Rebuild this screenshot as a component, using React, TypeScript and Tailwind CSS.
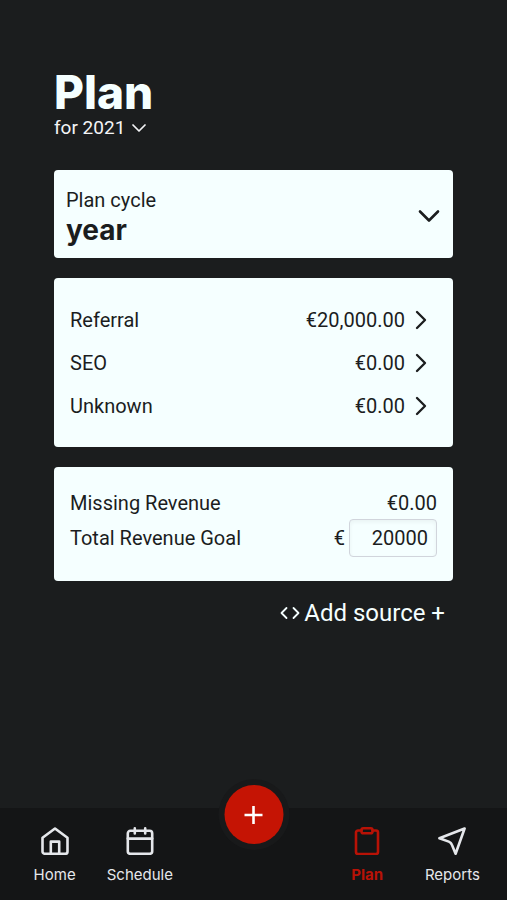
import { ChevronDown, ChevronRight } from 'lucide-react';

const sources = [
  { name: 'Referral', amount: '€20,000.00' },
  { name: 'SEO', amount: '€0.00' },
  { name: 'Unknown', amount: '€0.00' },
];

const years = ['2020', '2021', '2022'];
const cycles = ['month', 'quarter', 'year'];

const iconProps = {
  viewBox: '0 0 28 28',
  fill: 'none',
  stroke: 'currentColor',
  strokeWidth: 2.6,
  strokeLinecap: 'round',
  strokeLinejoin: 'round',
  className: 'size-7',
  'aria-hidden': true,
} as const;

const HomeIcon = () => (
  <svg {...iconProps}>
    <path d="M1.5 10.8 14 1.5l12.500 9.300v13.600a2.400 2.400 0 0 1-2.400 2.400H3.900a2.400 2.400 0 0 1-2.400-2.400z" />
    <path d="M9.800 26.600V14.600h8.400v12" />
  </svg>
);

const ScheduleIcon = () => (
  <svg {...iconProps}>
    <rect x="1.800" y="3.800" width="24.400" height="23" rx="2.600" />
    <path d="M1.800 11.600h24.400M8.800 1.400v5M19.200 1.400v5" />
  </svg>
);

const PlanIcon = () => (
  <svg {...iconProps}>
    <path d="M8.500 3.500H5A2 2 0 0 0 3 5.500V25a2 2 0 0 0 2 2h18a2 2 0 0 0 2-2V5.500a2 2 0 0 0-2-2h-3.500" />
    <rect x="8.500" y="1.300" width="11" height="5" rx="1.800" />
  </svg>
);

const ReportsIcon = () => (
  <svg {...iconProps}>
    <path d="M26.600 1.500 1.400 11.200l9.400 3.400q2.300.9 3.100 3.100l3.700 9z" />
  </svg>
);

const navLeft = [
  { label: 'Home', Icon: HomeIcon, active: false },
  { label: 'Schedule', Icon: ScheduleIcon, active: false },
];

const navRight = [
  { label: 'Plan', Icon: PlanIcon, active: true },
  { label: 'Reports', Icon: ReportsIcon, active: false },
];

const NavItem = ({ label, Icon, active }: (typeof navLeft)[number]) => (
  <a
    href={`#${label.toLowerCase()}`}
    aria-current={active ? 'page' : undefined}
    className={`flex flex-col items-center gap-2 font-[Inter,sans-serif] text-[15px] leading-6 ${
      active ? 'font-bold text-[#b81206]' : 'text-gray-200'
    }`}
  >
    <Icon />
    {label}
  </a>
);

const App = () => {
  return (
    <div className="flex min-h-screen flex-col bg-[#1b1d1e] font-[Roboto,sans-serif] text-xl text-[#1b1d1e]">
      <main className="flex flex-1 flex-col px-[54px] pt-[68px]">
        <h1 className="font-[Inter,sans-serif] text-[46px] leading-12 font-extrabold text-[#f5ffff]">Plan</h1>
        <div className="flex items-center text-[19px] leading-6 text-gray-100">
          <select
            aria-label="Plan year"
            defaultValue="2021"
            className="appearance-none bg-transparent field-sizing-content"
          >
            {years.map((year) => (
              <option key={year} value={year}>
                for {year}
              </option>
            ))}
          </select>
          <ChevronDown className="ml-0.5 size-6" strokeWidth={1.75} />
        </div>

        <section className="mt-[30px] flex items-center rounded bg-[#f5ffff] pt-4 pr-1.5 pb-3 pl-3">
          <div className="flex flex-1 flex-col">
            <label htmlFor="cycle" className="leading-7">
              Plan cycle
            </label>
            <select
              id="cycle"
              defaultValue="year"
              className="h-8 appearance-none bg-transparent font-[Inter,sans-serif] text-[28px] leading-8 font-bold"
            >
              {cycles.map((cycle) => (
                <option key={cycle}>{cycle}</option>
              ))}
            </select>
          </div>
          <ChevronDown className="pointer-events-none size-9" strokeWidth={1.75} />
        </section>

        <section className="mt-5 rounded bg-[#f5ffff] px-4 py-5">
          {sources.map((source) => (
            <button key={source.name} className="flex h-[43px] w-full items-center">
              <span className="flex-1 text-left">{source.name}</span>
              <span>{source.amount}</span>
              <ChevronRight className="size-8" strokeWidth={1.75} />
            </button>
          ))}
        </section>

        <section className="mt-5 rounded bg-[#f5ffff] px-4 pt-5 pb-6">
          <div className="flex items-center justify-between leading-8">
            <span>Missing Revenue</span>
            <span>€0.00</span>
          </div>
          <div className="flex items-center">
            <label htmlFor="goal" className="flex-1">
              Total Revenue Goal
            </label>
            <span className="mr-1">€</span>
            <input
              id="goal"
              type="text"
              inputMode="numeric"
              defaultValue="20000"
              className="h-[38px] w-22 rounded border border-gray-300 px-2 text-right shadow-inner"
            />
          </div>
        </section>

        <button className="mt-3 mr-2 flex items-center gap-1 self-end text-2xl leading-10 text-[#f5ffff]">
          <svg
            viewBox="0 0 20 14"
            fill="none"
            stroke="currentColor"
            strokeWidth="1.800"
            strokeLinecap="round"
            strokeLinejoin="round"
            className="h-[14px] w-5"
            aria-hidden="true"
          >
            <path d="M6.500 2 1.500 7l5 5M13.500 2l5 5-5 5" />
          </svg>
          Add source +
        </button>
      </main>

      <nav className="relative grid grid-cols-[3fr_3fr_5fr_3fr_3fr] bg-[#141516] px-3 pt-[19px] pb-[13px]">
        {navLeft.map((item) => (
          <NavItem key={item.label} {...item} />
        ))}
        <button
          aria-label="Add"
          className="absolute -top-[23px] left-1/2 flex size-[59px] -translate-x-1/2 items-center justify-center rounded-full bg-[#c51404] text-white ring-6 ring-[#18191a]"
        >
          <svg
            viewBox="0 0 20 20"
            stroke="currentColor"
            strokeWidth="2.600"
            className="size-5"
            aria-hidden="true"
          >
            <path d="M10 1v18M1 10h18" />
          </svg>
        </button>
        <span aria-hidden="true" />
        {navRight.map((item) => (
          <NavItem key={item.label} {...item} />
        ))}
      </nav>
    </div>
  );
};

export default App;
